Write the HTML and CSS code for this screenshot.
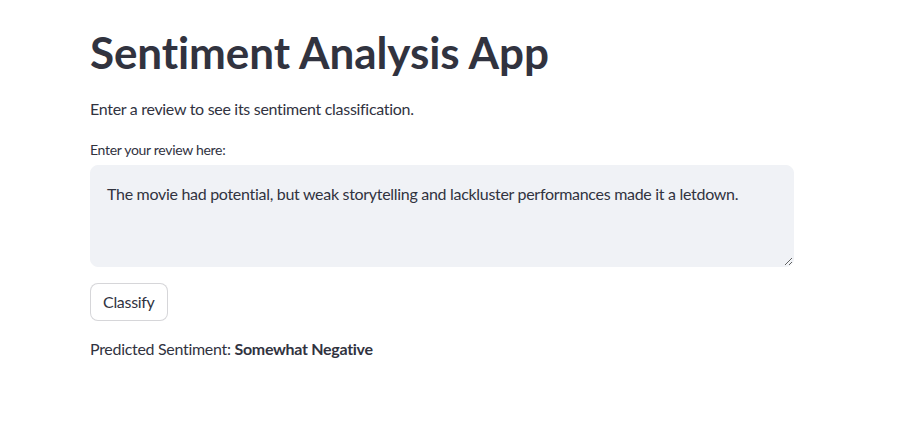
FILE: index.html
```html
<!DOCTYPE html>
<html lang="en">
<head>
<meta charset="utf-8">
<title>Sentiment Analysis App</title>
<link rel="stylesheet" href="styles.css">
</head>
<body>
<main class="app">
  <h1 class="title">Sentiment Analysis App</h1>
  <p class="intro">Enter a review to see its sentiment classification.</p>
  <div class="field">
    <label class="label" for="review">Enter your review here:</label>
    <textarea id="review" class="review">The movie had potential, but weak storytelling and lackluster performances made it a letdown.</textarea>
  </div>
  <div class="actions">
    <button class="btn" type="button">Classify</button>
  </div>
  <p class="result">Predicted Sentiment: <strong>Somewhat Negative</strong></p>
</main>
</body>
</html>
```
FILE: styles.css
```css
* { box-sizing: border-box; }
html, body { margin: 0; padding: 0; background: #fff; }
body {
  font-family: Lato, "Liberation Sans", sans-serif;
  color: #31333f;
  font-size: 16px;
  letter-spacing: -0.3px;
}
.app {
  width: 704px;
  margin-left: 90px;
  padding-top: 26px;
  display: flex;
  flex-direction: column;
}
.title {
  margin: 0;
  font-size: 44px;
  font-weight: 700;
  line-height: 1.2;
  letter-spacing: -0.1px;
}
.intro {
  margin: 18px 0 0;
  font-size: 16px;
  line-height: 24px;
}
.field {
  margin-top: 19px;
  display: flex;
  flex-direction: column;
}
.label {
  font-size: 14px;
  line-height: 20px;
  margin-bottom: 5px;
}
.review {
  width: 704px;
  height: 102px;
  background: #f0f2f6;
  border: 1px solid #f0f2f6;
  border-radius: 8px;
  padding: 16px 16px;
  font-family: inherit;
  font-size: 16px;
  line-height: 24px;
  letter-spacing: -0.3px;
  color: #31333f;
  resize: vertical;
  outline: none;
}
.actions { margin-top: 16px; }
.btn {
  height: 38px;
  padding: 0 12px;
  background: #fff;
  border: 1px solid rgba(49, 51, 63, 0.2);
  border-radius: 8px;
  font-family: inherit;
  font-size: 16px;
  letter-spacing: -0.3px;
  color: #31333f;
}
.result {
  margin: 16px 0 0;
  line-height: 24px;
}
.result strong { font-weight: 700; }
```
